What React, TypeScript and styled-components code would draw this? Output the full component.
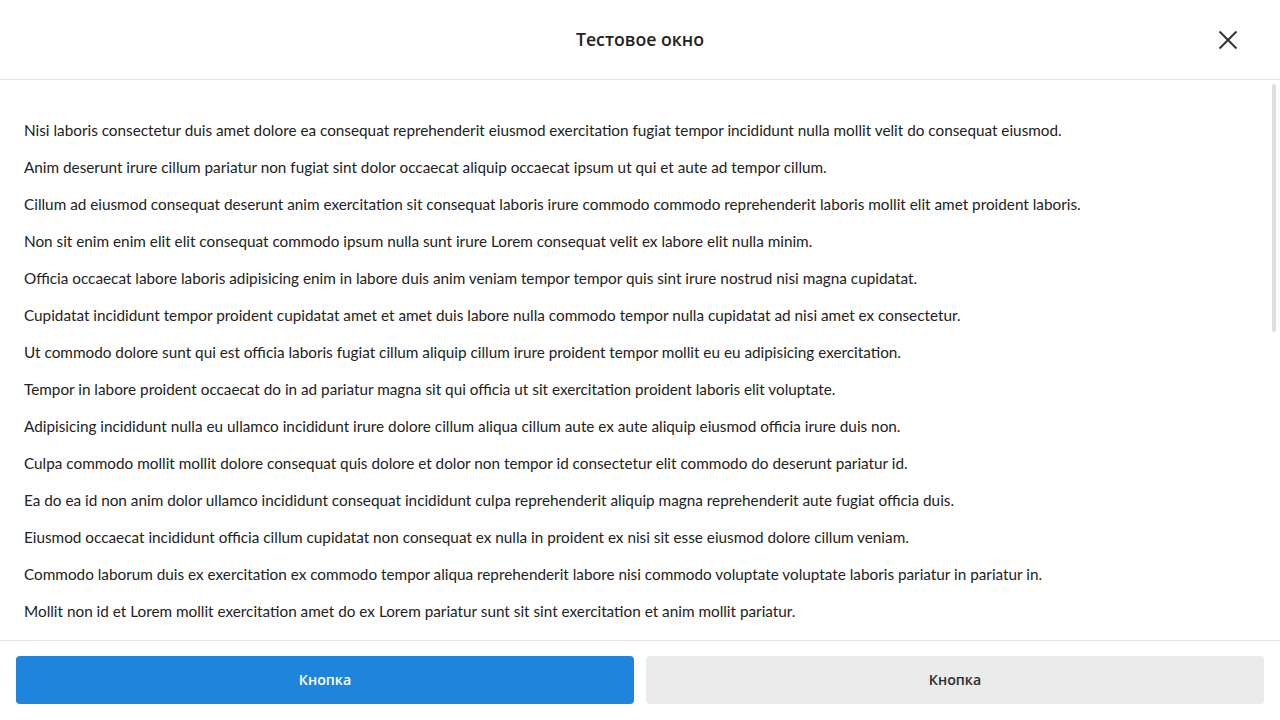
import React from "react";
import styled, { createGlobalStyle } from "styled-components";

const Global = createGlobalStyle`
  html, body { margin: 0; padding: 0; height: 100%; background: #fff; }
  #root { height: 100%; }
  * { box-sizing: border-box; }
`;

const Window = styled.div`
  height: 100vh;
  display: flex;
  flex-direction: column;
  background: #fff;
`;

const Header = styled.header`
  flex: 0 0 80px;
  display: flex;
  align-items: center;
  justify-content: center;
  position: relative;
  border-bottom: 1px solid #e3e3e3;
`;

const Title = styled.h1`
  margin: 0 0 1px;
  font-family: "Open Sans", sans-serif;
  font-weight: 600;
  font-size: 17.7px;
  color: #222;
`;

const CloseButton = styled.button`
  position: absolute;
  right: 40px;
  top: 28px;
  width: 24px;
  height: 24px;
  padding: 0;
  border: none;
  background: none;
  display: flex;
  align-items: center;
  justify-content: center;
  color: #333;
  cursor: pointer;
`;

const BodyFrame = styled.div`
  flex: 1 1 auto;
  min-height: 0;
  position: relative;
`;

const Body = styled.main`
  height: 100%;
  overflow: hidden;
  padding: 40px 24px 0;
`;

const ScrollThumb = styled.div`
  position: absolute;
  top: 4px;
  right: 4px;
  width: 4px;
  height: 248px;
  border-radius: 2px;
  background: #dedede;
`;

const Paragraph = styled.p`
  margin: 0 0 16px;
  font-family: "Lato", sans-serif;
  font-size: 15.3px;
  line-height: 21px;
  color: #222;
`;

const Footer = styled.footer`
  flex: 0 0 80px;
  display: grid;
  grid-template-columns: 1fr 1fr;
  gap: 12px;
  padding: 15px 16px 16px;
  border-top: 1px solid #e3e3e3;
`;

const Button = styled.button<{ $primary?: boolean }>`
  height: 48px;
  border: none;
  border-radius: 4px;
  padding: 0 0 2px;
  font-family: "Open Sans", sans-serif;
  font-weight: 600;
  font-size: 14.2px;
  background: ${(p) => (p.$primary ? "#1f84dc" : "#ebebeb")};
  color: ${(p) => (p.$primary ? "#fff" : "#2b2b2b")};
  cursor: pointer;
`;

const lines = [
  "Nisi laboris consectetur duis amet dolore ea consequat reprehenderit eiusmod exercitation fugiat tempor incididunt nulla mollit velit do consequat eiusmod.",
  "Anim deserunt irure cillum pariatur non fugiat sint dolor occaecat aliquip occaecat ipsum ut qui et aute ad tempor cillum.",
  "Cillum ad eiusmod consequat deserunt anim exercitation sit consequat laboris irure commodo commodo reprehenderit laboris mollit elit amet proident laboris.",
  "Non sit enim enim elit elit consequat commodo ipsum nulla sunt irure Lorem consequat velit ex labore elit nulla minim.",
  "Officia occaecat labore laboris adipisicing enim in labore duis anim veniam tempor tempor quis sint irure nostrud nisi magna cupidatat.",
  "Cupidatat incididunt tempor proident cupidatat amet et amet duis labore nulla commodo tempor nulla cupidatat ad nisi amet ex consectetur.",
  "Ut commodo dolore sunt qui est officia laboris fugiat cillum aliquip cillum irure proident tempor mollit eu eu adipisicing exercitation.",
  "Tempor in labore proident occaecat do in ad pariatur magna sit qui officia ut sit exercitation proident laboris elit voluptate.",
  "Adipisicing incididunt nulla eu ullamco incididunt irure dolore cillum aliqua cillum aute ex aute aliquip eiusmod officia irure duis non.",
  "Culpa commodo mollit mollit dolore consequat quis dolore et dolor non tempor id consectetur elit commodo do deserunt pariatur id.",
  "Ea do ea id non anim dolor ullamco incididunt consequat incididunt culpa reprehenderit aliquip magna reprehenderit aute fugiat officia duis.",
  "Eiusmod occaecat incididunt officia cillum cupidatat non consequat ex nulla in proident ex nisi sit esse eiusmod dolore cillum veniam.",
  "Commodo laborum duis ex exercitation ex commodo tempor aliqua reprehenderit labore nisi commodo voluptate voluptate laboris pariatur in pariatur in.",
  "Mollit non id et Lorem mollit exercitation amet do ex Lorem pariatur sunt sit sint exercitation et anim mollit pariatur.",
];

export default function App() {
  return (
    <>
      <Global />
      <Window>
        <Header>
          <Title>Тестовое окно</Title>
          <CloseButton aria-label="Закрыть">
            <svg width="20" height="20" viewBox="0 0 20 20" fill="none">
              <path d="M1.5 1.5L18.5 18.5M18.5 1.5L1.5 18.5" stroke="currentColor" strokeWidth="2" />
            </svg>
          </CloseButton>
        </Header>
        <BodyFrame>
          <Body>
            {lines.map((l, i) => (
              <Paragraph key={i}>{l}</Paragraph>
            ))}
          </Body>
          <ScrollThumb />
        </BodyFrame>
        <Footer>
          <Button $primary>Кнопка</Button>
          <Button>Кнопка</Button>
        </Footer>
      </Window>
    </>
  );
}
